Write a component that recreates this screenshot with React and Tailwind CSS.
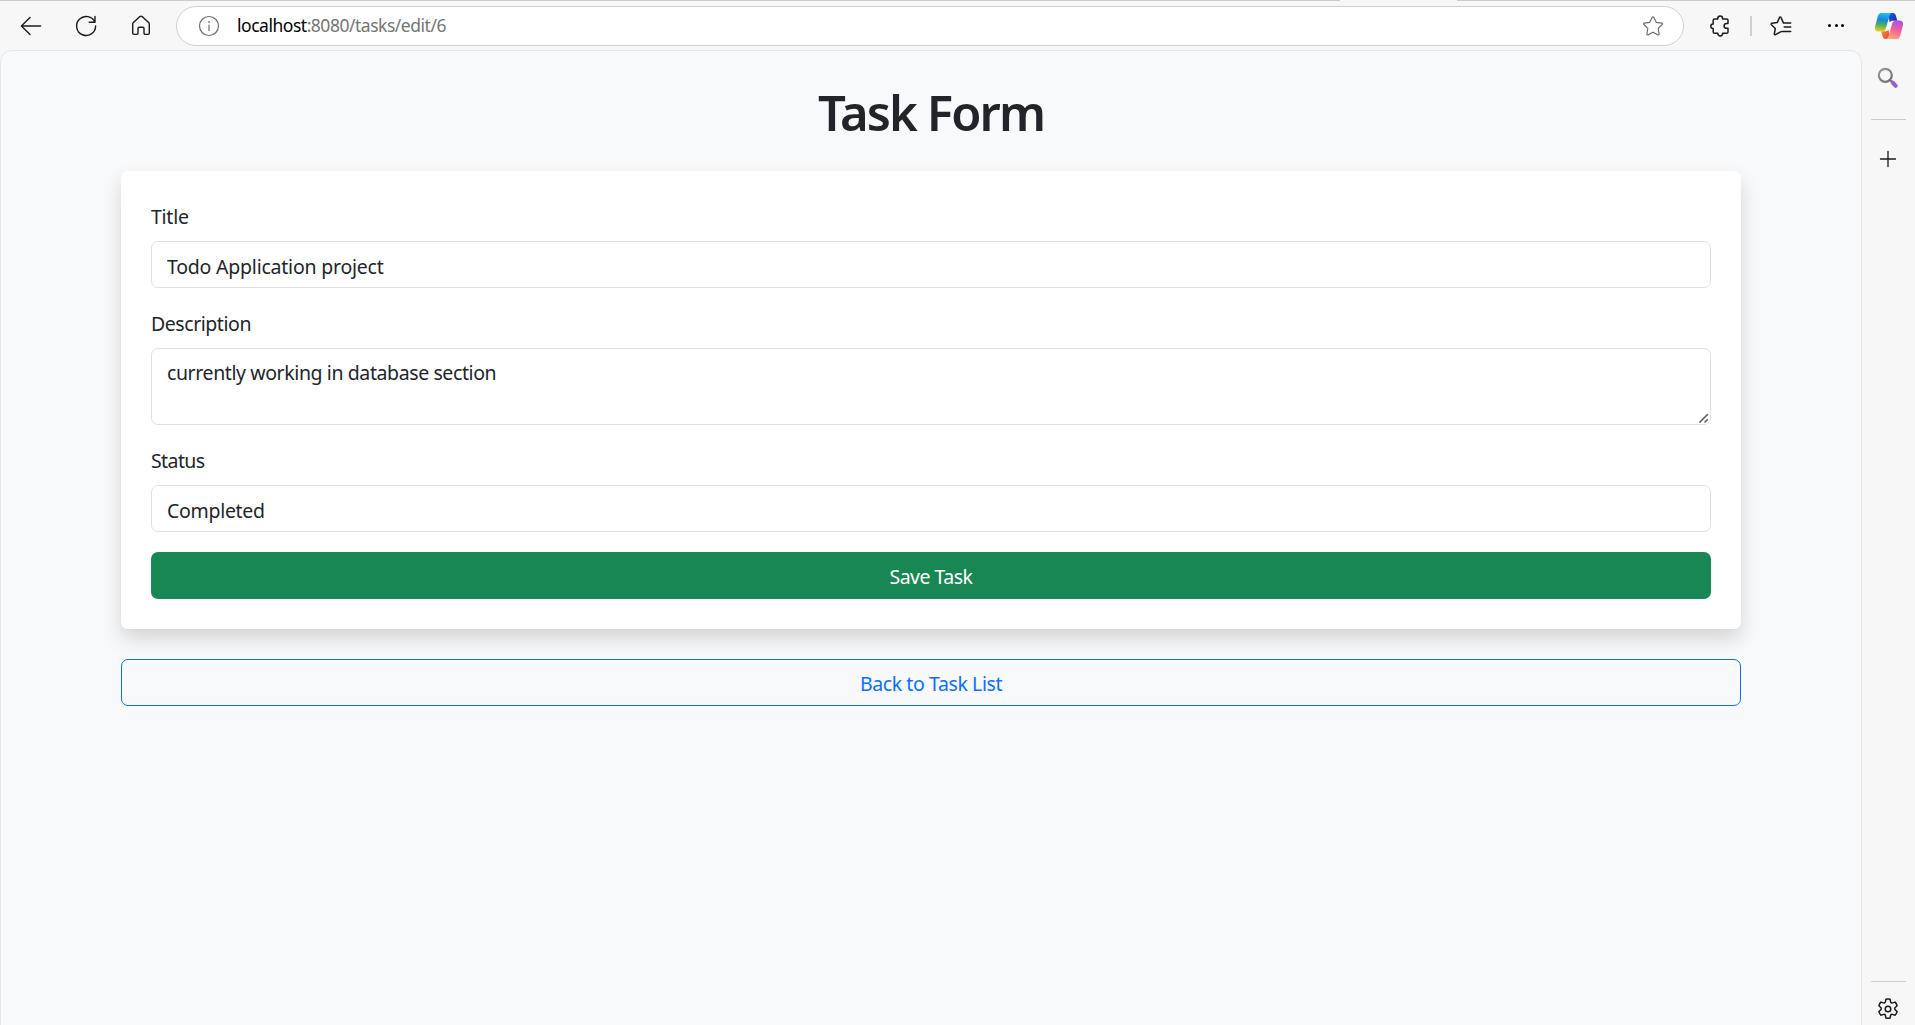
import React from "react";

const stroke = {
  fill: "none",
  stroke: "currentColor",
  strokeWidth: 1.4,
  strokeLinecap: "round",
  strokeLinejoin: "round",
};

function BackIcon() {
  return (
    <svg width="24" height="24" viewBox="0 0 24 24" {...stroke}>
      <path d="M21.6 12H2.6M11 3.6 2.4 12l8.6 8.4" />
    </svg>
  );
}

function RefreshIcon() {
  return (
    <svg width="24" height="24" viewBox="0 0 24 24" {...stroke}>
      <path d="M20.9 8.4A9.5 9.5 0 1 0 21.6 12M21 2.4v5.8h-5.8" />
    </svg>
  );
}

function HomeIcon() {
  return (
    <svg width="24" height="24" viewBox="0 0 24 24" {...stroke}>
      <path d="M3.7 10.1c0-.6.2-1 .7-1.5l6.500-6c.7-.6 1.500-.6 2.200 0l6.500 6c.5.5.7.9.7 1.500v8.900c0 .9-.5 1.400-1.400 1.400h-2.600c-.8 0-1.300-.5-1.300-1.300v-4.600c0-.8-.5-1.300-1.300-1.300h-3.400c-.8 0-1.300.5-1.300 1.300v4.600c0 .8-.5 1.300-1.300 1.300H5.100c-.9 0-1.400-.5-1.400-1.400z" />
    </svg>
  );
}

function InfoIcon() {
  return (
    <svg width="22" height="22" viewBox="0 0 22 22" {...stroke} strokeWidth="1.2">
      <circle cx="11" cy="11" r="9.500" />
      <path d="M11 10v5.400" />
      <circle cx="11" cy="6.900" r=".9" fill="currentColor" stroke="none" />
    </svg>
  );
}

function StarIcon() {
  return (
    <svg width="22" height="22" viewBox="0 0 22 22" {...stroke} strokeWidth="1.200">
      <path d="M10.300 2.200c.3-.6 1.100-.6 1.400 0l2.500 5.100 5.600.8c.7.1.9.9.4 1.400l-4 3.900.9 5.600c.1.700-.6 1.200-1.200.9L11 17.200l-4.900 2.700c-.6.3-1.300-.2-1.200-.9l.9-5.600-4-3.900c-.5-.5-.3-1.300.4-1.400l5.600-.8z" />
    </svg>
  );
}

function PuzzleIcon() {
  return (
    <svg width="20" height="22" viewBox="0 0 20 22" {...stroke} strokeWidth="1.500">
      <path d="M3.200 5.300c0-.9.500-1.400 1.400-1.400h3.200V3.500c0-1.500 1-2.500 2.400-2.500s2.400 1 2.400 2.500v.4h4c.9 0 1.400.5 1.400 1.400v3.200h-1.400c-1.500 0-2.500 1-2.500 2.400s1 2.400 2.500 2.400H18v3.600c0 .9-.5 1.400-1.400 1.400h-4v.3c0 1.400-1 2.400-2.400 2.400s-2.400-1-2.400-2.400v-.3H4.600c-.9 0-1.400-.5-1.400-1.400v-3.300c-1.500 0-2.400-1-2.400-2.300s.9-2.400 2.400-2.400z" />
    </svg>
  );
}

function FavoritesIcon() {
  return (
    <svg width="22" height="22" viewBox="0 0 22 22" {...stroke} strokeWidth="1.500">
      <path d="M13.400 7.900 11 2.500c-.3-.7-1.200-.7-1.500 0L7.200 7.600l-5.300.7c-.8.1-1 .9-.5 1.500l3.900 3.700-1 5.300c-.1.800.6 1.300 1.300.9l5-2.900M13.400 7.900h7.300M14.200 12.100h6.500M11.800 16.400h8.900" />
    </svg>
  );
}

function CopilotIcon() {
  return (
    <svg width="30" height="28" viewBox="0 0 30 28">
      <defs>
        <linearGradient id="cpA" x1="8" y1="1" x2="6" y2="19.500" gradientUnits="userSpaceOnUse">
          <stop offset="0" stopColor="#28b8f5" />
          <stop offset=".35" stopColor="#1688d8" />
          <stop offset=".65" stopColor="#4fae62" />
          <stop offset="1" stopColor="#f5cf12" />
        </linearGradient>
        <linearGradient id="cpB" x1="24" y1="8" x2="17" y2="27" gradientUnits="userSpaceOnUse">
          <stop offset="0" stopColor="#a950ec" />
          <stop offset=".5" stopColor="#f0609c" />
          <stop offset="1" stopColor="#ffae70" />
        </linearGradient>
        <linearGradient id="cpC" x1="14" y1="1" x2="22" y2="8" gradientUnits="userSpaceOnUse">
          <stop offset="0" stopColor="#1560d8" />
          <stop offset="1" stopColor="#1c35b8" />
        </linearGradient>
        <linearGradient id="cpD" x1="8" y1="20" x2="15" y2="26" gradientUnits="userSpaceOnUse">
          <stop offset="0" stopColor="#f58a2c" />
          <stop offset="1" stopColor="#e8443c" />
        </linearGradient>
      </defs>
      <path d="M14 1h4.700c1.900 0 2.700 1 3.200 2.700l1.400 5.100h-4.600c-1.500 0-2.300.5-3 1.700z" fill="url(#cpC)" />
      <path d="M16 27h-4.200c-1.900 0-2.700-1-3.200-2.700L7.100 19.200h4.400c1.500 0 2.400-.6 3-1.700z" fill="url(#cpD)" />
      <path d="M6.800 1h11.100c-1.200.5-1.900 1.400-2.400 3l-3.600 12.200c-.6 2-1.800 3.300-3.900 3.300H5c-3.200 0-4.700-2-3.900-5.100L3.600 5C4.300 2.500 5.400 1 6.800 1z" fill="url(#cpA)" />
      <path d="M23.200 27H12.100c1.200-.5 1.900-1.400 2.400-3l3.600-12.200c.6-2 1.800-3.300 3.900-3.300h3c3.200 0 4.700 2 3.900 5.100L26.400 23c-.7 2.500-1.800 4-3.200 4z" fill="url(#cpB)" />
    </svg>
  );
}

function SearchIcon() {
  return (
    <svg width="22" height="22" viewBox="0 0 22 22" fill="none">
      <defs>
        <linearGradient id="lens" x1="3" y1="2" x2="14" y2="15" gradientUnits="userSpaceOnUse">
          <stop offset="0" stopColor="#9a9a9a" />
          <stop offset="1" stopColor="#6c6c6c" />
        </linearGradient>
      </defs>
      <path d="m12.800 12.800 3 3" stroke="#707070" strokeWidth="2" />
      <circle cx="8.300" cy="8.300" r="6.500" stroke="url(#lens)" strokeWidth="2.200" />
      <path d="m15.700 15.700 3 3.200" stroke="#9560cc" strokeWidth="4" strokeLinecap="round" />
    </svg>
  );
}

function GearIcon() {
  return (
    <svg width="22" height="24" viewBox="0 0 22 24" {...stroke} strokeWidth="1.500">
      <circle cx="11" cy="12" r="2.800" />
      <path d="M8.900 2.300c1.400-.4 2.800-.4 4.200 0l.5 2.500c.2.900 1.100 1.400 1.900 1.100l2.500-.8c1 1 1.700 2.200 2.100 3.600l-1.900 1.800c-.7.700-.7 1.700 0 2.300l1.900 1.800c-.4 1.400-1.100 2.600-2.100 3.600l-2.500-.8c-.8-.3-1.700.2-1.900 1.100l-.5 2.500c-1.400.4-2.800.4-4.200 0l-.5-2.500c-.2-.9-1.100-1.400-1.900-1.100l-2.500.8c-1-1-1.700-2.200-2.100-3.600l1.900-1.800c.7-.6.7-1.600 0-2.300L1.900 8.700C2.300 7.300 3 6.100 4 5.100l2.500.8c.8.300 1.700-.2 1.900-1.100z" />
    </svg>
  );
}

function Toolbar() {
  return (
    <header className="flex h-[50px] shrink-0 flex-col">
      <div className="flex h-px justify-between">
        <div className="w-[1340px] bg-[#cbcbcb]" />
        <div className="w-[458px] bg-[#cbcbcb]" />
      </div>
      <div className="flex h-[49px] items-center text-[#1b1b1b]">
        <div className="ml-[19px] flex w-[157px] gap-[31px]">
          <BackIcon />
          <RefreshIcon />
          <HomeIcon />
        </div>
        <div className="flex h-10 w-[1508px] items-center rounded-full border border-[#d0d0d0] bg-white pr-[19px] pl-[21px] text-[#6e6e6e]">
          <InfoIcon />
          <div className="ml-[17px] flex-1 pb-px text-[17.500px] leading-6 tracking-[-0.480px] text-[#757575]">
            <span className="text-black">localhost</span>:8080/tasks/edit/6
          </div>
          <StarIcon />
        </div>
        <div className="ml-[26px]">
          <PuzzleIcon />
        </div>
        <div className="ml-5 h-5 w-0.5 bg-[#d0d0d0]" />
        <div className="ml-[18px]">
          <FavoritesIcon />
        </div>
        <div className="ml-[36px] flex gap-[3.500px]">
          <i className="size-[3px] rounded-full bg-black" />
          <i className="size-[3px] rounded-full bg-black" />
          <i className="size-[3px] rounded-full bg-black" />
        </div>
        <div className="ml-[30px]">
          <CopilotIcon />
        </div>
      </div>
    </header>
  );
}

function SideBar() {
  return (
    <aside className="flex w-[53px] shrink-0 flex-col items-center pt-[17px] text-[#1b1b1b]">
      <div className="mr-[2px]">
        <SearchIcon />
      </div>
      <div className="mt-[30px] h-px w-[35px] bg-[#cdcdcd]" />
      <svg className="mt-[30px] mr-px" width="18" height="18" viewBox="0 0 18 18" {...stroke} strokeWidth="1.300">
        <path d="M1.500 9h15M9 1.500v15" />
      </svg>
      <div className="mt-auto h-px w-[35px] bg-[#cdcdcd]" />
      <div className="mt-[15px] mr-px mb-1">
        <GearIcon />
      </div>
    </aside>
  );
}

function Field({ label, id, children }) {
  return (
    <div className="mb-5">
      <label htmlFor={id} className="mb-2.5 block h-[30px] pt-px">
        {label}
      </label>
      {children}
    </div>
  );
}

function TaskForm() {
  return (
    <main className="flex flex-1 flex-col items-center rounded-t-[12px] border border-b-0 border-[#e7e7e9] bg-[#f8f9fb] pt-[30px] text-[19.500px] leading-[30px] text-[#212529]">
      <h1 className="mb-[30px] h-[60px] pt-px text-[49px] leading-[60px] font-semibold tracking-[-1.900px]">Task Form</h1>
      <div className="w-[1620px]">
        <form className="rounded-[7px] bg-white p-[30px] shadow-[0_10px_20px_rgba(0,0,0,0.15)]" onSubmit={(e) => e.preventDefault()}>
          <Field label={<span className="tracking-[-0.250px]">Title</span>} id="title">
            <input
              id="title"
              defaultValue="Todo Application project"
              className="block h-[47px] w-full rounded-[7px] border border-[#dee2e6] bg-white px-[15px] pt-[3px] tracking-[-0.220px] outline-none"
            />
          </Field>
          <Field label={<span className="tracking-[-0.450px]">Description</span>} id="description">
            <div className="relative">
              <textarea
                id="description"
                defaultValue="currently working in database section"
                className="block h-[77px] w-full resize-none rounded-[7px] border border-[#dee2e6] bg-white px-[15px] pt-[9px] tracking-[-0.400px] outline-none"
              />
              <svg className="absolute right-[2px] bottom-[1px]" width="11" height="11" viewBox="0 0 11 11" fill="none" stroke="#555" strokeWidth="1.500">
                <path d="M1.500 9.500 9.800 1.200M6.500 9.500l3.300-3.300" />
              </svg>
            </div>
          </Field>
          <Field label={<span className="tracking-[-0.600px]">Status</span>} id="status">
            <input
              id="status"
              defaultValue="Completed"
              className="block h-[47px] w-full rounded-[7px] border border-[#dee2e6] bg-white px-[15px] pt-[3px] tracking-[-0.300px] outline-none"
            />
          </Field>
          <button className="block h-[47px] w-full rounded-[7px] bg-[#198754] pt-[3px] tracking-[-0.500px] text-white">Save Task</button>
        </form>
        <button className="mt-[30px] block h-[47px] w-full rounded-[7px] border border-[#0d6efd] pt-[3px] tracking-[-0.400px] text-[#0d6efd]">
          Back to Task List
        </button>
      </div>
    </main>
  );
}

export default function App() {
  return (
    <div className="flex h-screen flex-col overflow-hidden bg-[#f7f7f7] font-['Noto_Sans','Open_Sans',sans-serif]">
      <Toolbar />
      <div className="flex min-h-0 flex-1">
        <TaskForm />
        <SideBar />
      </div>
    </div>
  );
}
